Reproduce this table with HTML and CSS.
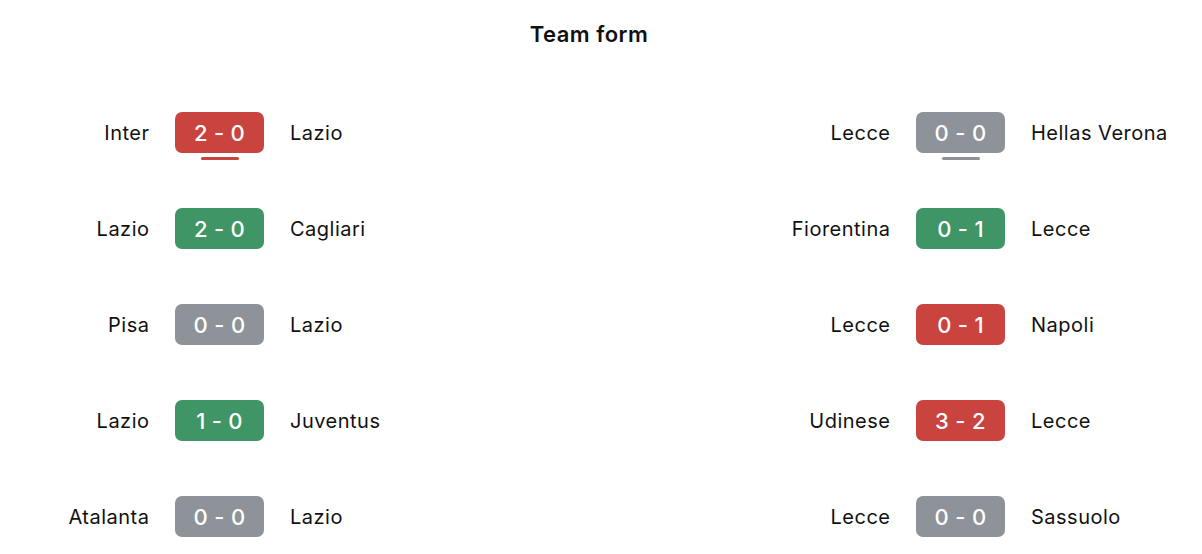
FILE: index.html
```html
<!DOCTYPE html>
<html lang="en">
<head>
<meta charset="utf-8">
<title>Team form</title>
<link rel="stylesheet" href="styles.css">
</head>
<body>
<main class="form">
  <h2 class="form__title">Team form</h2>
  <div class="form__columns">
    <section class="team-col">
      <div class="match">
        <span class="match__home">Inter</span>
        <span class="score score--loss score--latest">2 - 0</span>
        <span class="match__away">Lazio</span>
      </div>
      <div class="match">
        <span class="match__home">Lazio</span>
        <span class="score score--win">2 - 0</span>
        <span class="match__away">Cagliari</span>
      </div>
      <div class="match">
        <span class="match__home">Pisa</span>
        <span class="score score--draw">0 - 0</span>
        <span class="match__away">Lazio</span>
      </div>
      <div class="match">
        <span class="match__home">Lazio</span>
        <span class="score score--win">1 - 0</span>
        <span class="match__away">Juventus</span>
      </div>
      <div class="match">
        <span class="match__home">Atalanta</span>
        <span class="score score--draw">0 - 0</span>
        <span class="match__away">Lazio</span>
      </div>
    </section>
    <section class="team-col">
      <div class="match">
        <span class="match__home">Lecce</span>
        <span class="score score--draw score--latest">0 - 0</span>
        <span class="match__away">Hellas Verona</span>
      </div>
      <div class="match">
        <span class="match__home">Fiorentina</span>
        <span class="score score--win">0 - 1</span>
        <span class="match__away">Lecce</span>
      </div>
      <div class="match">
        <span class="match__home">Lecce</span>
        <span class="score score--loss">0 - 1</span>
        <span class="match__away">Napoli</span>
      </div>
      <div class="match">
        <span class="match__home">Udinese</span>
        <span class="score score--loss">3 - 2</span>
        <span class="match__away">Lecce</span>
      </div>
      <div class="match">
        <span class="match__home">Lecce</span>
        <span class="score score--draw">0 - 0</span>
        <span class="match__away">Sassuolo</span>
      </div>
    </section>
  </div>
</main>
</body>
</html>
```
FILE: styles.css
```css
html, body {
  margin: 0;
  padding: 0;
  background: #ffffff;
}

body {
  font-family: Inter, "Noto Sans", "Liberation Sans", sans-serif;
  color: #111111;
}

.form {
  display: flex;
  flex-direction: column;
}

.form__title {
  margin: 0;
  padding: 20px 24px 0 0;
  text-align: center;
  font-size: 22px;
  line-height: 28px;
  font-weight: 600;
  letter-spacing: 0.5px;
  color: #111111;
}

.form__columns {
  display: flex;
  justify-content: space-between;
  padding: 64px 24px 0 24px;
}

.team-col {
  display: flex;
  flex-direction: column;
  gap: 55px;
}

.match {
  display: grid;
  grid-template-columns: 125px 89px 147px;
  column-gap: 26px;
  align-items: center;
  height: 41px;
  font-size: 20px;
  letter-spacing: 0.5px;
}

.match__home {
  text-align: right;
  white-space: nowrap;
  margin-right: -0.5px;
}

.match__away {
  text-align: left;
  white-space: nowrap;
}

.score {
  position: relative;
  display: flex;
  align-items: center;
  justify-content: center;
  height: 41px;
  border-radius: 7px;
  color: #ffffff;
  font-size: 22px;
  font-weight: 500;
  letter-spacing: 0.3px;
}

.score--win { background: #3f9565; }
.score--loss { background: #c9443f; }
.score--draw { background: #8e939a; }

.score--latest::after {
  content: "";
  position: absolute;
  left: 50%;
  top: 45px;
  width: 38px;
  height: 3px;
  margin-left: -19px;
  border-radius: 2px;
  background: inherit;
}
```
